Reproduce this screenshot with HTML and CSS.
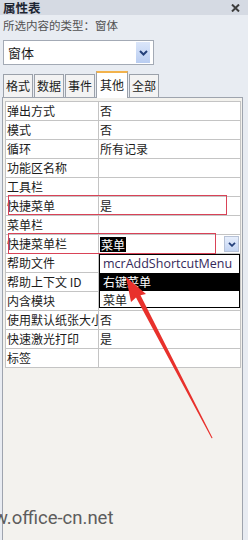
FILE: index.html
```html
<!DOCTYPE html>
<html lang="zh">
<head>
<meta charset="utf-8">
<link rel="stylesheet" href="styles.css">
</head>
<body>
<div class="window">
  <div class="titlebar">
    <span class="title">属性表</span>
    <svg class="close" width="9" height="8" viewBox="0 0 9 8"><path d="M1 0.5 L8 7.5 M8 0.5 L1 7.5" stroke="#3d3d3d" stroke-width="2"/></svg>
  </div>
  <div class="subtitle">所选内容的类型：窗体</div>
  <div class="combo">
    <span class="combo-text">窗体</span>
    <span class="combo-btn"><svg width="9" height="6" viewBox="0 0 9 6"><path d="M1 1 L4.5 4.5 L8 1" fill="none" stroke="#24407a" stroke-width="2"/></svg></span>
  </div>
  <div class="tabs">
    <div class="tab">格式</div>
    <div class="tab">数据</div>
    <div class="tab">事件</div>
    <div class="tab active">其他</div>
    <div class="tab">全部</div>
  </div>
  <div class="pane">
    <div class="grid">
      <div class="cell">弹出方式</div><div class="cell">否</div>
      <div class="cell">模式</div><div class="cell">否</div>
      <div class="cell">循环</div><div class="cell">所有记录</div>
      <div class="cell">功能区名称</div><div class="cell"></div>
      <div class="cell">工具栏</div><div class="cell"></div>
      <div class="cell">快捷菜单</div><div class="cell">是</div>
      <div class="cell">菜单栏</div><div class="cell"></div>
      <div class="cell">快捷菜单栏</div><div class="cell value-edit"><span class="sel">菜单</span><span class="row-btn"><svg width="8" height="5" viewBox="0 0 8 5"><path d="M1 0.8 L4 3.8 L7 0.8" fill="none" stroke="#24407a" stroke-width="1.8"/></svg></span></div>
      <div class="cell">帮助文件</div><div class="cell"></div>
      <div class="cell">帮助上下文 ID</div><div class="cell"></div>
      <div class="cell">内含模块</div><div class="cell"></div>
      <div class="cell">使用默认纸张大小</div><div class="cell">否</div>
      <div class="cell">快速激光打印</div><div class="cell">是</div>
      <div class="cell">标签</div><div class="cell"></div>
    </div>
  </div>
</div>

<div class="mark mark-1"></div>
<div class="mark mark-2"></div>

<div class="droplist">
  <div class="item latin">mcrAddShortcutMenu</div>
  <div class="item chosen">右键菜单</div>
  <div class="item">菜单</div>
</div>

<svg class="arrow" width="248" height="540" viewBox="0 0 248 540">
  <polygon points="126,277 146,294 140.5,295.2 212.6,438 211.6,438.3 136,297.6 131,302" fill="#e8312c"/>
</svg>

<div class="watermark">w.office-cn.net</div>
</body>
</html>
```

FILE: styles.css
```css
* { box-sizing: border-box; }
html, body { margin: 0; padding: 0; }
body {
  width: 248px;
  height: 540px;
  overflow: hidden;
  position: relative;
  background: #e8ecf2;
  font-family: "Noto Sans CJK SC", "Noto Sans", sans-serif;
  font-size: 12px;
  color: #1c1c1c;
}
.window { display: flex; flex-direction: column; height: 540px; }
.titlebar {
  height: 15px;
  background: #d5dae3;
  display: flex;
  align-items: center;
  justify-content: space-between;
  padding: 0 8px 0 3px;
}
.title { font-weight: bold; font-size: 12.5px; line-height: 15px; color: #1e2633; }
.subtitle {
  height: 20px;
  padding: 3px 0 0 3px;
  line-height: 14px;
  font-size: 11.5px;
  color: #525252;
}
.combo {
  margin: 5px 0 0 3px;
  width: 151px;
  height: 25px;
  background: #fff;
  border: 1px solid #a3aab5;
  display: flex;
  align-items: center;
  justify-content: space-between;
  padding: 0 3px 0 4px;
}
.combo-text { font-size: 13px; line-height: 16px; }
.combo-btn {
  width: 14px;
  height: 21px;
  background: linear-gradient(#dbe6fa, #b9cdf1);
  display: flex;
  align-items: center;
  justify-content: center;
}
.tabs {
  margin: 6px 0 0 3px;
  height: 26px;
  display: flex;
  align-items: flex-end;
  gap: 1px;
}
.tab {
  height: 23px;
  padding: 0 2px;
  border: 1px solid #9ba1aa;
  border-bottom: none;
  background: #f3f3f3;
  line-height: 21px;
}
.tab.active {
  height: 27px;
  padding: 0 3px;
  background: #fff;
  border-top: 2px solid #f2b24c;
  margin-bottom: -1px;
  position: relative;
  z-index: 1;
  line-height: 23px;
}
.pane {
  flex: 1;
  margin-left: 2px;
  width: 241px;
  border: 1px solid #9ea4ae;
  border-bottom: none;
  background: #f3f2ee;
  padding: 3px 0 0 2px;
}
.grid {
  display: grid;
  grid-template-columns: 93px 142px;
  width: 236px;
  border-top: 1px solid #c4c4c4;
  border-left: 1px solid #c4c4c4;
  background: #fff;
}
.cell {
  height: 19px;
  border-right: 1px solid #c4c4c4;
  border-bottom: 1px solid #c4c4c4;
  padding-left: 1px;
  line-height: 18px;
  white-space: nowrap;
  overflow: hidden;
}
.value-edit {
  display: flex;
  align-items: center;
  justify-content: space-between;
  padding-right: 1px;
}
.sel { background: #000; color: #fff; line-height: 15px; padding: 0 1px; }
.row-btn {
  width: 15px;
  height: 16px;
  border: 1px solid #b7c2d6;
  background: linear-gradient(#e6eefc, #c3d4f2);
  display: flex;
  align-items: center;
  justify-content: center;
}
.mark {
  position: absolute;
  border: 1px solid #d94357;
}
.mark-1 { left: 8px; top: 195px; width: 219px; height: 20px; }
.mark-2 { left: 8px; top: 233px; width: 208px; height: 21px; }
.droplist {
  position: absolute;
  left: 99px;
  top: 254px;
  width: 141px;
  height: 54px;
  border: 1px solid #000;
  background: #fff;
}
.item { height: 17px; line-height: 17px; padding-left: 3px; white-space: nowrap; }
.item.latin { font-family: "Open Sans", "Noto Sans", sans-serif; font-size: 12.5px; color: #35295a; height: 18px; }
.item.chosen { background: #000; color: #fff; height: 18px; }
.arrow { position: absolute; left: 0; top: 0; }
.watermark {
  position: absolute;
  left: -6px;
  top: 507px;
  font-family: Roboto, "Liberation Sans", sans-serif;
  font-size: 18.5px;
  color: #5d5d5d;
}
```
